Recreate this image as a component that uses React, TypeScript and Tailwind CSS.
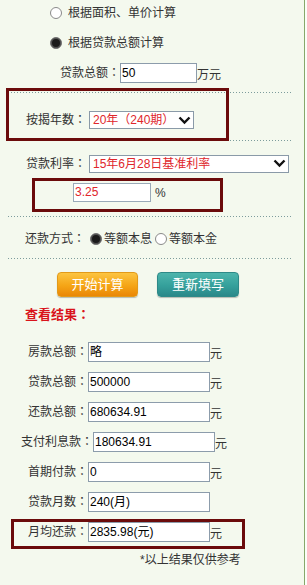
import React from 'react';

const font = { fontFamily: '"Liberation Sans", "Noto Sans CJK JP", sans-serif' };

const Radio: React.FC<{ on?: boolean }> = ({ on }) =>
  on ? (
    <span className="inline-block w-[12px] h-[12px] rounded-full bg-[#1a1a1a] border border-[#777] shadow-[inset_0_0_0_1px_#555]" />
  ) : (
    <span className="inline-block w-[12px] h-[12px] rounded-full bg-white border border-[#8a8a8a]" />
  );

const Dots = () => (
  <div className="ml-[8px] w-[285px] h-px bg-[linear-gradient(to_right,#7d9c9c_1px,transparent_1px)] bg-[length:3px_1px]" />
);

const Chevron: React.FC = () => (
  <svg width="13" height="9" viewBox="0 0 13 9" className="shrink-0">
    <path d="M1.5 1.5 L6.5 6.5 L11.5 1.5" fill="none" stroke="#111" strokeWidth="2.4" />
  </svg>
);

const Field: React.FC<{ label: string; value: string; pl: string; unit?: boolean }> = ({ label, value, pl, unit = true }) => (
  <div className={`flex items-center h-[20px] ${pl}`}>
    <span className="text-[12px] text-[#333] leading-none">{label}</span>
    <div className="w-[122px] h-[20px] border border-[#8c9cab] bg-white text-[12px] text-black leading-[18px] px-[1px]">{value}</div>
    {unit && <span className="text-[12px] text-[#333] leading-none mt-[4px]">元</span>}
  </div>
);

export default function App() {
  return (
    <div style={font} className="relative w-[307px] h-[585px] bg-[#f4f9ee] overflow-hidden">
      <div className="absolute top-0 right-[2px] w-px h-full bg-[#86a86a]" />
      <div className="absolute top-0 right-0 w-[2px] h-full bg-[#fbfdf8]" />

      {/* top */}
      <div className="flex items-center h-[26px] pl-[50px] gap-[6px]">
        <Radio />
        <span className="text-[12px] text-[#333]">根据面积、单价计算</span>
      </div>
      <div className="flex items-center h-[26px] mt-[4px] pl-[50px] gap-[6px]">
        <Radio on />
        <span className="text-[12px] text-[#333]">根据贷款总额计算</span>
      </div>
      <div className="flex items-center h-[20px] mt-[7px] pl-[60px]">
        <span className="text-[12px] text-[#333]">贷款总额：</span>
        <div className="w-[77px] h-[20px] border border-[#8c9cab] bg-white text-[12px] text-black leading-[18px] px-[1px]">50</div>
        <span className="text-[12px] text-[#333] mt-[4px]">万元</span>
      </div>
      <div className="mt-[9px]"><Dots /></div>

      {/* years */}
      <div className="flex items-center h-[18px] mt-[18px] pl-[26px]">
        <span className="text-[12px] text-[#333] w-[63px]">按揭年数：</span>
        <div className="w-[105px] h-[18px] border border-[#8a9aa8] bg-white flex items-center justify-between pl-[3px] pr-[2px]">
          <span className="text-[12px] text-[#e0262b] leading-none">20年（240期）</span>
          <Chevron />
        </div>
      </div>
      <div className="mt-[11px]"><Dots /></div>

      {/* rate */}
      <div className="flex items-center h-[17px] mt-[14px] pl-[26px]">
        <span className="text-[12px] text-[#333] w-[63px]">贷款利率：</span>
        <div className="w-[200px] h-[18px] border border-[#8a9aa8] bg-white flex items-center justify-between pl-[3px] pr-[2px]">
          <span className="text-[12px] text-[#e0262b] leading-none">15年6月28日基准利率</span>
          <Chevron />
        </div>
      </div>
      <div className="flex items-center h-[19px] mt-[11px] pl-[73px] gap-[4px]">
        <div className="w-[78px] h-[19px] border border-[#9aaab8] bg-white text-[12px] text-[#e0262b] leading-[17px] px-[1px]">3.25</div>
        <span className="text-[12px] text-[#333]">%</span>
      </div>
      <div className="mt-[14px]"><Dots /></div>

      {/* method */}
      <div className="flex items-center h-[20px] mt-[12px] pl-[25px]">
        <span className="text-[12px] text-[#333] w-[65px]">还款方式：</span>
        <Radio on />
        <span className="text-[12px] text-[#333] ml-[2px]">等额本息</span>
        <span className="ml-[3px] flex"><Radio /></span>
        <span className="text-[12px] text-[#333] ml-[2px]">等额本金</span>
      </div>
      <div className="mt-[9px]"><Dots /></div>

      {/* buttons */}
      <div className="flex items-center mt-[13px] pl-[57px] gap-[19px]">
        <button className="w-[81px] h-[25px] rounded-[4px] border border-[#e29a1a] bg-[linear-gradient(to_bottom,#fcc441,#f5a516_55%,#ea8706)] text-white text-[13px] shadow-[0_1px_1px_rgba(0,0,0,0.25)]">开始计算</button>
        <button className="w-[82px] h-[25px] rounded-[4px] border border-[#2e8a88] bg-[linear-gradient(to_bottom,#4db5ac,#35a09b_55%,#2a8889)] text-white text-[13px] shadow-[0_1px_1px_rgba(0,0,0,0.25)]">重新填写</button>
      </div>

      <div className="h-[16px] mt-[10px] pl-[25px] flex items-center">
        <span className="text-[13px] font-bold text-[#d9141b]">查看结果：</span>
      </div>

      {/* results */}
      <div className="mt-[19px] flex flex-col gap-[10px]">
        <Field label="房款总额：" value="略" pl="pl-[28px]" />
        <Field label="贷款总额：" value="500000" pl="pl-[28px]" />
        <Field label="还款总额：" value="680634.91" pl="pl-[28px]" />
        <Field label="支付利息款：" value="180634.91" pl="pl-[21px]" />
        <Field label="首期付款：" value="0" pl="pl-[28px]" />
        <Field label="贷款月数：" value="240(月)" pl="pl-[28px]" unit={false} />
        <Field label="月均还款：" value="2835.98(元)" pl="pl-[28px]" />
      </div>

      <div className="h-[16px] mt-[10px] pl-[140px] flex items-center">
        <span className="text-[12px] text-[#333]">*以上结果仅供参考</span>
      </div>

      {/* highlight boxes */}
      <div className="absolute left-[6px] top-[88px] w-[223px] h-[53px] border-[3px] border-[#6b0b0b] pointer-events-none" />
      <div className="absolute left-[32px] top-[178px] w-[191px] h-[34px] border-[3px] border-[#6b0b0b] pointer-events-none" />
      <div className="absolute left-[11px] top-[519px] w-[234px] h-[30px] border-[3px] border-[#6b0b0b] pointer-events-none" />
    </div>
  );
}
